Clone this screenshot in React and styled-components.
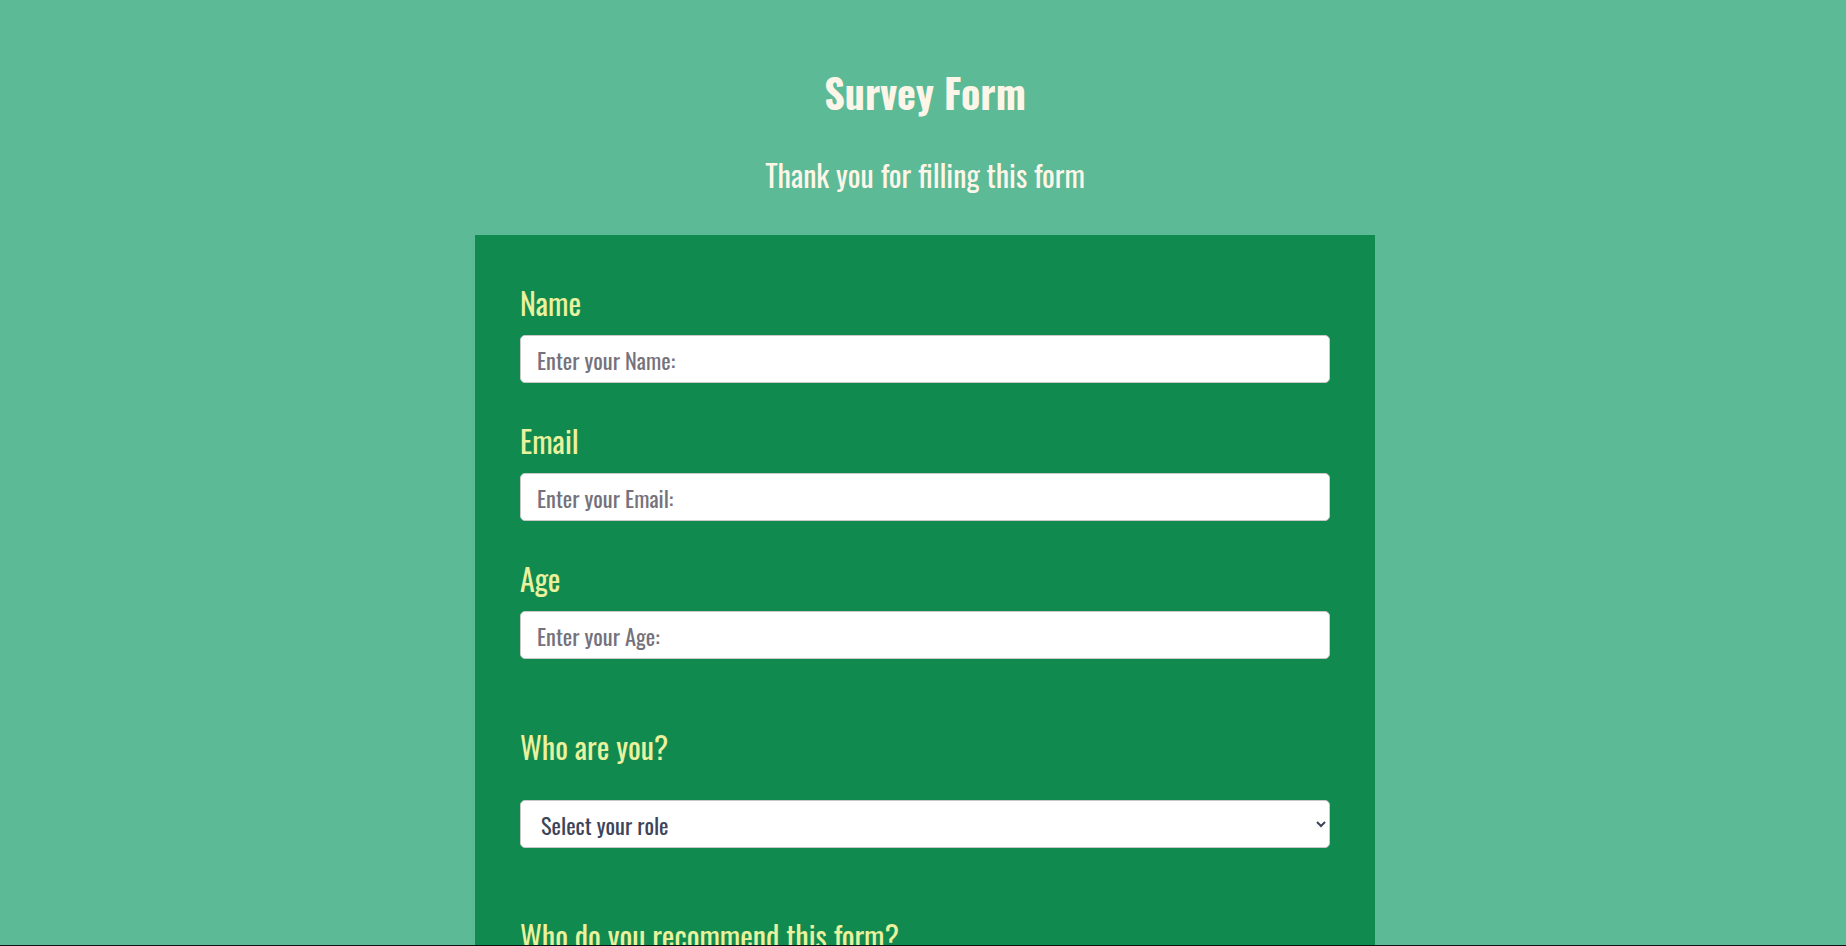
import React from 'react';
import styled, { createGlobalStyle } from 'styled-components';

const GlobalStyle = createGlobalStyle`
  * {
    box-sizing: border-box;
  }
  body {
    margin: 0;
    background-color: #5dba96;
    font-family: Oswald, "Roboto Condensed", "DejaVu Sans Condensed", sans-serif;
  }
`;

export const Page = styled.main`
  display: flex;
  flex-direction: column;
  align-items: center;
  padding: 0 0 0 4px;
`;

export const Header = styled.header`
  display: flex;
  flex-direction: column;
  align-items: center;
  padding-top: 68px;
`;

export const Title = styled.h1`
  margin: 0;
  color: #fdf6e8;
  font-size: 40px;
  font-weight: 700;
  line-height: 1.2;
`;

export const Description = styled.p`
  margin: 41px 0 0;
  color: #fdf6e8;
  font-size: 30px;
  font-weight: 400;
  line-height: 1.2;
`;

export const Card = styled.form`
  width: 900px;
  margin-top: 42px;
  padding: 50px 45px 120px;
  background-color: #118a50;
`;

export const Field = styled.div`
  display: flex;
  flex-direction: column;
  margin-bottom: ${(p) => (p.$spaced ? '70px' : '40px')};
`;

export const Label = styled.label`
  color: #eaf29e;
  font-size: 30px;
  line-height: 1.2;
  margin-bottom: ${(p) => (p.$spaced ? '35px' : '14px')};
`;

export const Input = styled.input`
  width: 100%;
  height: 48px;
  padding: 0 16px;
  border: 1px solid #c9c9c9;
  border-radius: 5px;
  background: #fff;
  font-family: inherit;
  font-size: 22.4px;
  color: #333;
  outline: none;

  &::placeholder {
    color: #75727c;
  }
`;

export const Select = styled.select`
  width: 100%;
  height: 48px;
  padding: 0 12px 0 16px;
  border: 1px solid #c9c9c9;
  border-radius: 5px;
  background: #fff;
  font-family: inherit;
  font-size: 22.4px;
  color: #3d4459;
  outline: none;
`;

export const BottomEdge = styled.div`
  position: fixed;
  left: 0;
  right: 0;
  bottom: 0;
  height: 1px;
  background: #111;
`;

export default function App() {
  return (
    <>
      <GlobalStyle />
      <Page>
        <Header>
          <Title>Survey Form</Title>
          <Description>Thank you for filling this form</Description>
        </Header>
        <Card onSubmit={(e) => e.preventDefault()}>
          <Field>
            <Label htmlFor="name">Name</Label>
            <Input id="name" type="text" placeholder="Enter your Name:" />
          </Field>
          <Field>
            <Label htmlFor="email">Email</Label>
            <Input id="email" type="email" placeholder="Enter your Email:" />
          </Field>
          <Field $spaced>
            <Label htmlFor="age">Age</Label>
            <Input id="age" type="number" placeholder="Enter your Age:" />
          </Field>
          <Field $spaced>
            <Label htmlFor="role" $spaced>Who are you?</Label>
            <Select id="role" defaultValue="">
              <option value="" disabled>Select your role</option>
              <option value="student">Student</option>
              <option value="job">Full Time Job</option>
              <option value="learner">Full Time Learner</option>
              <option value="other">Other</option>
            </Select>
          </Field>
          <Field>
            <Label>Who do you recommend this form?</Label>
          </Field>
        </Card>
      </Page>
      <BottomEdge />
    </>
  );
}
